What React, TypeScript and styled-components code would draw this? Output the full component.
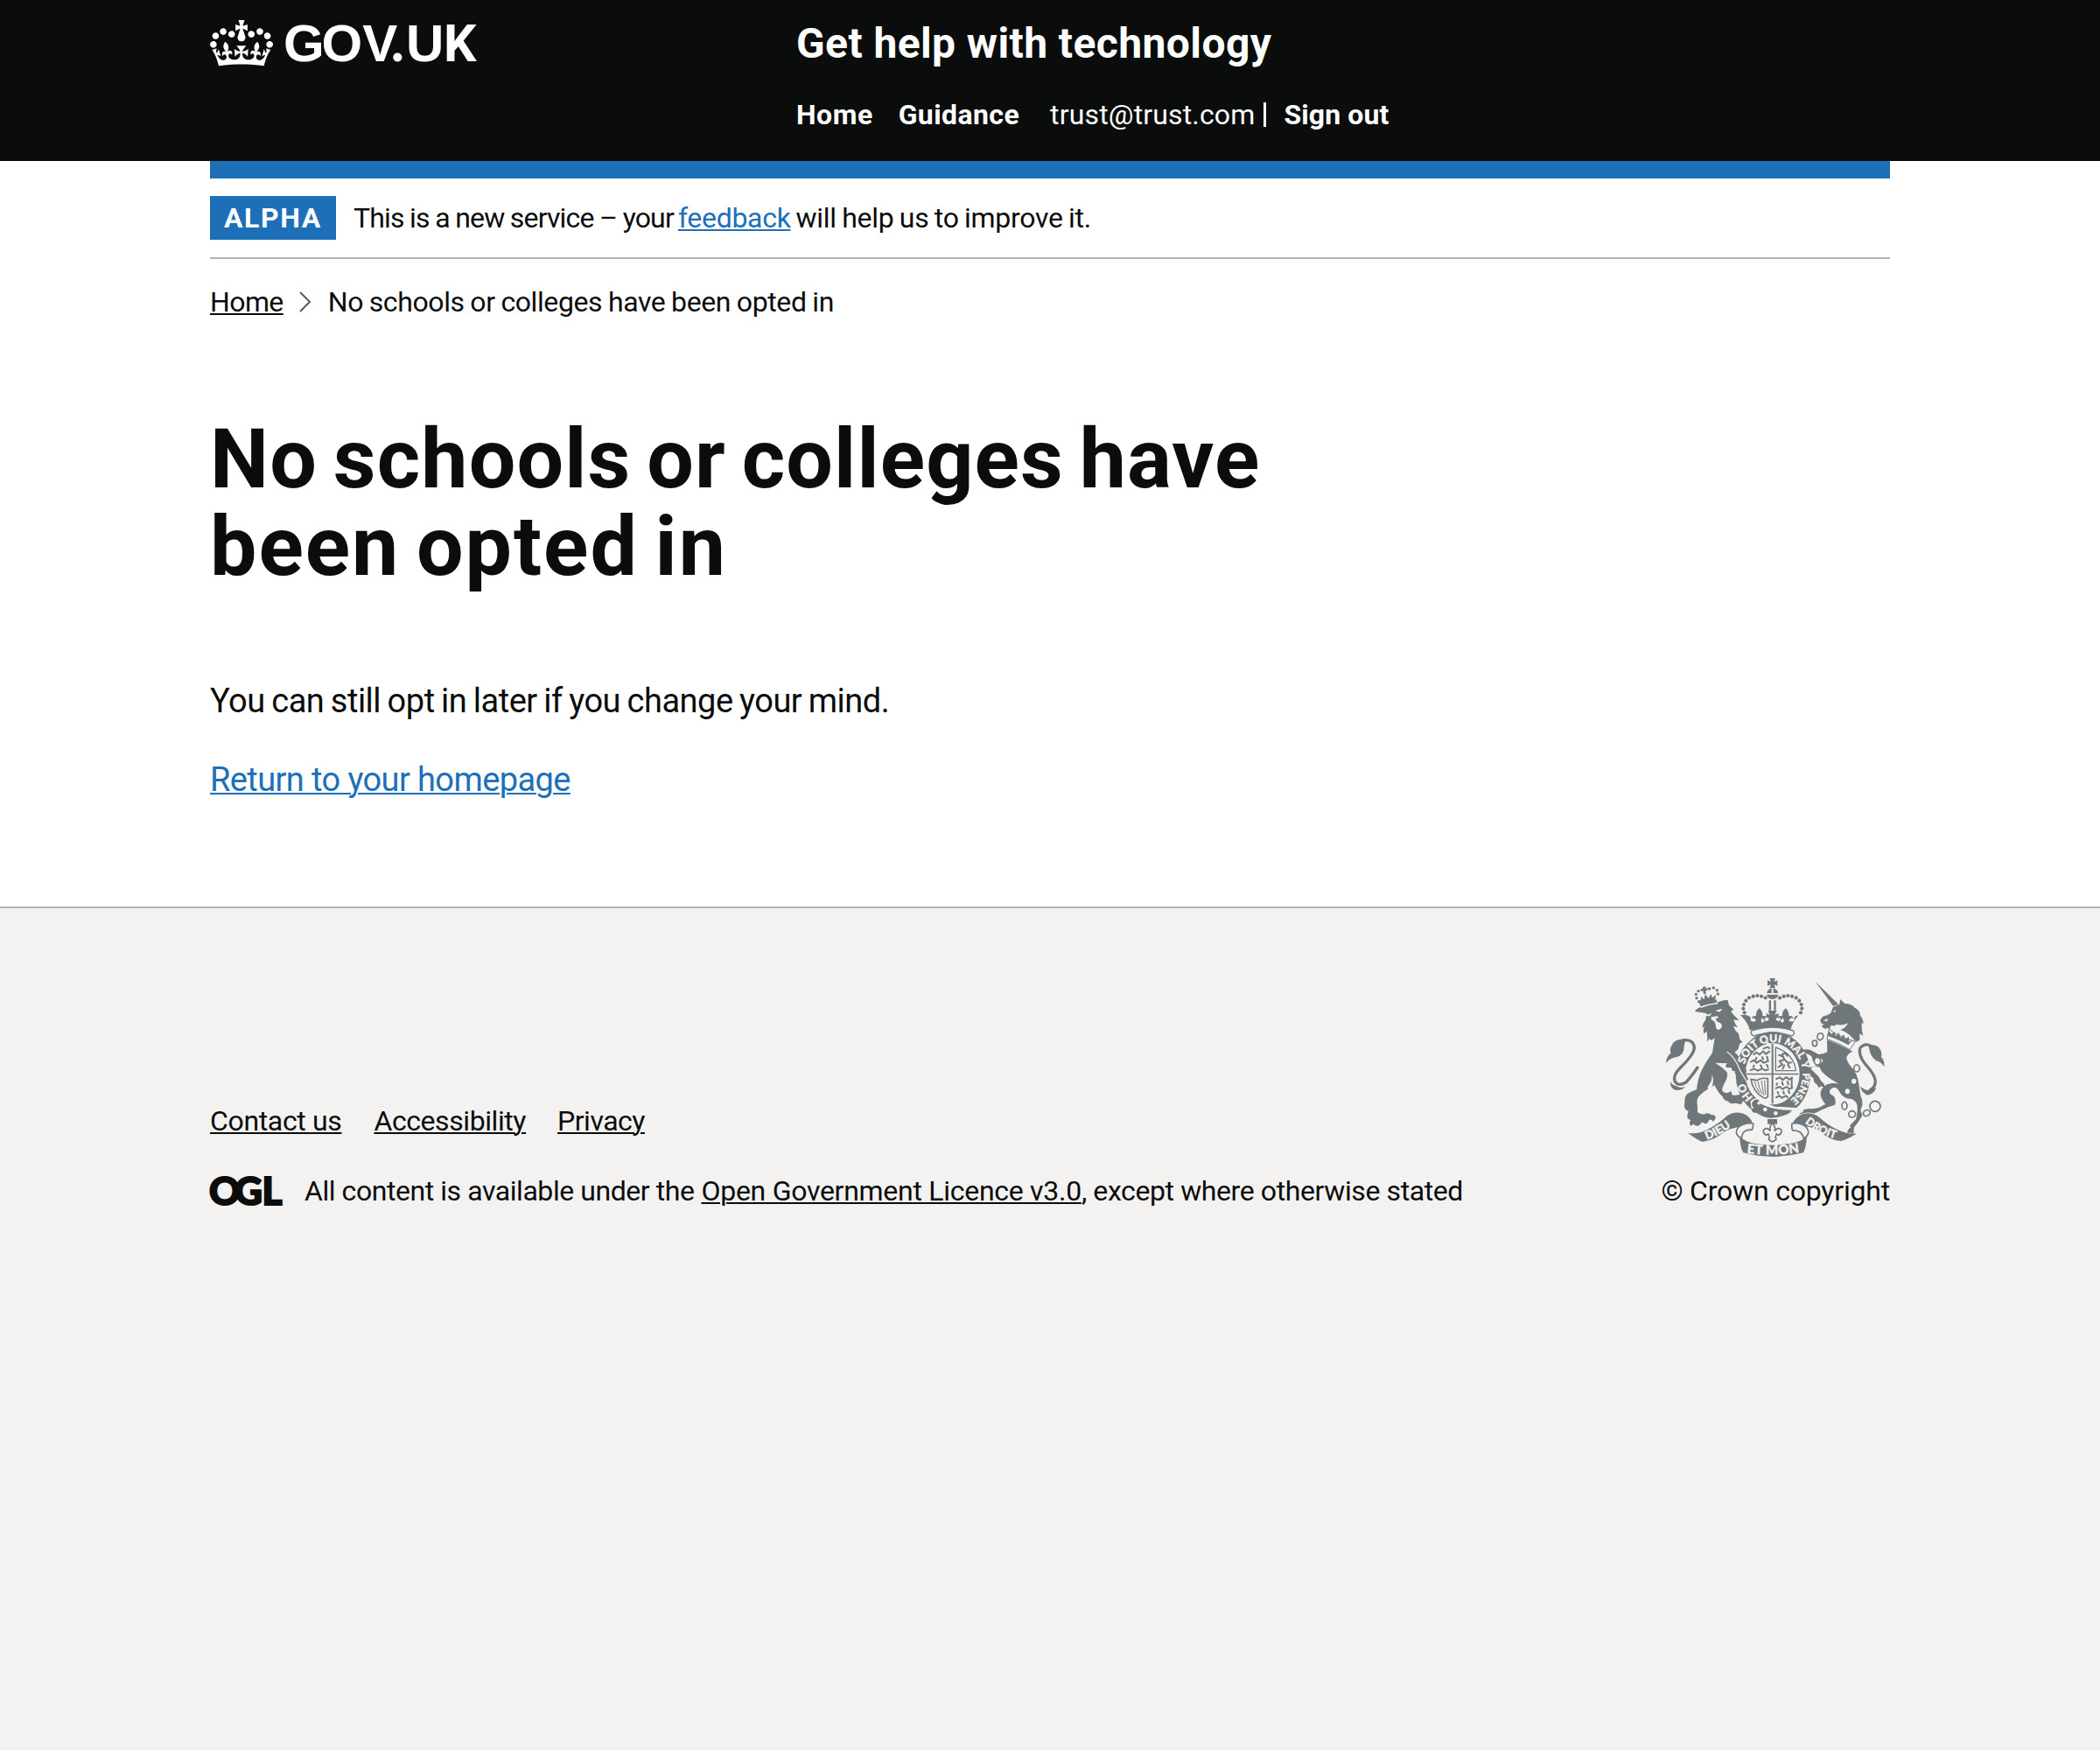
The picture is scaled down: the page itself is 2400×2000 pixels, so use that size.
import React from 'react';
import styled, { createGlobalStyle } from 'styled-components';

const INK = '#0b0c0c';
const BLUE = '#1d70b8';
const PAPER = '#f3f2f1';
const CREST = '#6f777b';

const GlobalStyle = createGlobalStyle`
  html, body { margin: 0; background: ${PAPER}; }
  body { font-family: Roboto, "Liberation Sans", sans-serif; color: ${INK}; }
`;

const Page = styled.div`
  min-height: 2000px;
  display: flex;
  flex-direction: column;
`;

const Container = styled.div`
  width: 1920px;
  margin: 0 auto;
`;

const HeaderBar = styled.header`
  background: ${INK};
  color: #fff;
  height: 184px;
`;

const HeaderGrid = styled(Container)`
  display: grid;
  grid-template-columns: 670px 1fr;
`;

const LogoLink = styled.a`
  display: block;
  padding-top: 23px;
  color: #fff;
`;

const Service = styled.div`
  padding-top: 20px;
`;

const Track = styled.span<{ $ls?: number; $ws?: number }>`
  letter-spacing: ${p => p.$ls ?? 0}px;
  word-spacing: ${p => p.$ws ?? 0}px;
  white-space: nowrap;
`;

const ServiceName = styled.div`
  font-size: 48px;
  line-height: 60px;
  font-weight: 700;
`;

const Nav = styled.nav`
  display: flex;
  align-items: center;
  margin-top: 31px;
  font-size: 32px;
  line-height: 40px;
`;

const NavLink = styled(Track).attrs({ as: 'a' })<{ $gap?: number }>`
  font-weight: 700;
  margin-right: ${p => p.$gap ?? 0}px;
`;

const User = styled(Track)`
  margin-right: 10px;
`;

const Divider = styled.span`
  width: 3px;
  height: 28px;
  margin-right: 20px;
  background: #fff;
`;

const Main = styled.div`
  background: #fff;
  padding-bottom: 120px;
`;

const BlueBar = styled.div`
  height: 20px;
  background: ${BLUE};
`;

const PhaseBanner = styled.div`
  display: flex;
  align-items: center;
  padding: 20px 0;
  border-bottom: 2px solid #b1b4b6;
  font-size: 32px;
  line-height: 50px;
`;

const Tag = styled.strong`
  box-sizing: border-box;
  width: 144px;
  height: 50px;
  margin-right: 20px;
  padding-left: 16px;
  background: ${BLUE};
  color: #fff;
  letter-spacing: 1.6px;
`;

const Link = styled(Track).attrs({ as: 'a' })<{ $color?: string; $gap?: number }>`
  color: ${p => p.$color ?? INK};
  margin-right: ${p => p.$gap ?? 0}px;
  text-decoration: underline;
  text-decoration-thickness: 2px;
  text-underline-offset: 2px;
`;

const Phrase = styled(Track)<{ $gap?: number }>`
  margin-right: ${p => p.$gap ?? 0}px;
`;

const Breadcrumbs = styled.nav`
  display: flex;
  align-items: center;
  margin-top: 29px;
  font-size: 32px;
  line-height: 40px;
`;

const Chevron = styled.svg`
  display: block;
  margin: 0 19px 0 18px;
`;

const Title = styled.h1`
  margin: 110px 0 0;
  font-size: 95px;
  line-height: 100px;
  font-weight: 700;
`;

const TitleLine = styled(Track)`
  display: block;
`;

const Para = styled.p<{ $top: number }>`
  margin: ${p => p.$top}px 0 0;
  font-size: 38px;
  line-height: 50px;
`;

const FooterArea = styled.footer`
  flex: 1;
  background: ${PAPER};
  border-top: 2px solid #b1b4b6;
  padding-top: 80px;
  font-size: 32px;
  line-height: 40px;
`;

const FooterRow = styled(Container)`
  display: flex;
  align-items: flex-end;
  justify-content: space-between;
`;

const FooterLinks = styled.div`
  display: flex;
  margin-bottom: 40px;
`;

const Licence = styled.div`
  display: flex;
  align-items: center;
`;

const OglMark = styled.svg`
  display: block;
  margin-right: 26px;
`;

const Copyright = styled.div`
  display: flex;
  flex-direction: column;
  align-items: flex-end;
`;

const Crest = styled.svg`
  display: block;
  margin: 0 6px 19px 0;
`;

const GovLogo = () => (
  <svg width="310" height="54" viewBox="0 0 310 54" overflow="visible">
    <g transform="scale(.5455)">
      <path
        fill="#fff"
        fillRule="evenodd"
        d="M25 30.2c3.5 1.5 7.7-.2 9.1-3.7 1.5-3.6-.2-7.8-3.9-9.2-3.6-1.4-7.6.3-9.1 3.9-1.4 3.5.3 7.5 3.9 9zM9 39.5c3.6 1.5 7.8-.2 9.2-3.7 1.5-3.6-.2-7.8-3.9-9.1-3.6-1.5-7.6.2-9.1 3.8-1.4 3.5.3 7.5 3.8 9zM4.4 57.2c3.5 1.5 7.7-.2 9.1-3.8 1.5-3.6-.2-7.7-3.9-9.1-3.5-1.5-7.6.3-9.1 3.8-1.4 3.5.3 7.6 3.9 9.1zm38.3-21.4c3.5 1.5 7.7-.2 9.1-3.8 1.5-3.6-.2-7.7-3.9-9.1-3.6-1.5-7.6.3-9.1 3.8-1.3 3.6.4 7.7 3.9 9.1zm64.4-5.6c-3.6 1.5-7.8-.2-9.1-3.7-1.5-3.6.2-7.8 3.8-9.2 3.6-1.4 7.7.3 9.2 3.9 1.3 3.5-.4 7.5-3.9 9zm15.9 9.3c-3.6 1.5-7.7-.2-9.1-3.7-1.5-3.6.2-7.8 3.7-9.1 3.6-1.5 7.7.2 9.2 3.8 1.5 3.5-.3 7.5-3.8 9zm4.7 17.7c-3.6 1.5-7.8-.2-9.2-3.8-1.5-3.6.2-7.7 3.9-9.1 3.6-1.5 7.7.3 9.2 3.8 1.3 3.5-.4 7.6-3.9 9.1zM89.3 35.8c-3.6 1.5-7.8-.2-9.2-3.8-1.4-3.6.2-7.7 3.9-9.1 3.6-1.5 7.7.3 9.2 3.8 1.4 3.6-.3 7.7-3.9 9.1zM69.7 17.7l8.9 4.7V9.3l-8.9 2.8c-.2-.3-.5-.6-.9-.9L72.4 0H59.6l3.5 11.2c-.3.3-.6.5-.9.9l-8.8-2.8v13.1l8.8-4.7c.3.3.6.7.9.9l-5 15.4v.1c-.2.8-.4 1.6-.4 2.4 0 4.1 3.1 7.5 7 8.1h.2c.3 0 .7.1 1 .1.4 0 .7 0 1-.1h.2c4-.6 7.1-4.1 7.1-8.1 0-.8-.1-1.7-.4-2.4V34l-5.1-15.4c.4-.2.7-.6 1-.9zM66 92.8c16.9 0 32.8 1.1 47.1 3.2 4-16.9 8.9-26.7 14-33.5l-9.6-3.4c1 4.9 1.1 7.2 0 10.2-1.5-1.4-3-4.3-4.2-8.7L108.6 76c2.8-2 5-3.2 7.5-3.3-4.4 9.4-10 11.9-13.6 11.2-4.3-.8-6.3-4.6-5.6-7.9 1-4.7 5.7-5.9 8-.5 4.3-8.7-3-11.4-7.6-8.8 7.1-7.2 7.9-13.5 2.1-21.1-8 6.1-8.1 12.3-4.5 20.8-4.7-5.4-12.1-2.5-9.5 6.2 3.4-5.2 7.9-2 7.2 3.1-.6 4.3-6.4 7.8-13.5 7.2-10.3-.9-10.9-8-11.2-13.8 2.5-.5 7.1 1.8 11 7.3L80.2 60c-4.1 4.4-8 5.3-12.3 5.4 1.4-4.4 8-11.6 8-11.6H55.5s6.4 7.2 7.9 11.6c-4.2-.1-8-1-12.3-5.4l1.4 16.4c3.9-5.5 8.5-7.7 10.9-7.3-.3 5.8-.9 12.8-11.1 13.8-7.2.6-12.9-2.9-13.5-7.2-.7-5 3.8-8.3 7.1-3.1 2.7-8.7-4.6-11.6-9.4-6.2 3.7-8.5 3.6-14.7-4.6-20.8-5.8 7.6-5 13.9 2.2 21.1-4.7-2.6-11.9.1-7.7 8.8 2.3-5.5 7.1-4.2 8.1.5.7 3.3-1.3 7.1-5.7 7.9-3.5.7-9-1.8-13.5-11.2 2.5.1 4.7 1.3 7.5 3.3l-4.7-15.4c-1.2 4.4-2.7 7.2-4.3 8.7-1.1-3-.9-5.3 0-10.2l-9.5 3.4c5 6.9 9.9 16.7 14 33.5 14.8-2.1 30.8-3.2 47.7-3.2z"
      />
    </g>
    <text x="84 127.5 174.3 206.5 224 267" y="47" fill="#fff" fontFamily="Liberation Sans" fontWeight="700" fontSize="60">
      GOV<tspan fontFamily="Lato" fontSize="66">.</tspan>U<tspan fontFamily="Roboto" fontSize="59">K</tspan>
    </text>
  </svg>
);

/* Beads running along each arch of the royal crown */
const beads: [number, number][] = [
  [414, 121], [400, 116], [386, 114], [372, 116], [358, 121], [347, 131], [340, 144], [338, 158], [342, 172],
];

const RoyalArms = () => (
  <Crest width="250" height="204" viewBox="73 54 750 612">
    <defs>
      <path id="garter" d="M440 491 A102 109 0 0 1 440 273 A102 109 0 0 1 440 491" />
      <path id="dieu" d="M213 608 Q268 588 322 542" />
      <path id="droit" d="M549 549 Q596 592 680 611" />
      <path id="mon" d="M350 653 Q438 665 528 651" />
    </defs>
    <g fill={CREST} stroke="none">
      {/* royal crown */}
      <path d="M428 54h20l-5 12 12-5v19l-12-5 5 13h-20l5-13-12 5V61l12 5z" />
      <path d="M419 105a19 17 0 0 1 16-16v16zM441 89a19 17 0 0 1 16 16h-16zM418 110h40q-3 14-20 16-17-2-20-16z" />
      <path d="M426 130h7v34h-7zM443 130h7v34h-7z" />
      {beads.map(([x, y]) => (
        <g key={x}>
          <circle cx={x} cy={y} r="6.3" />
          <circle cx={877 - x} cy={y} r="6.3" />
        </g>
      ))}
      <path d="M348 180l14 6 2 14q12 6 18-2l-8-8-8 2q4-12 16-8-2-16 11-27 13 11 11 27 13-4 16 8l-8-3q-5 10 6 12 8-2 8-9l-9-6v-12l12 6-6-15h30l-7 15 13-6v12l-9 6q0 8 9 9 10-2 5-12l-8 3q3-12 16-8-2-16 11-27 13 11 11 27 12-4 16 8l-8-2-8 8q6 8 18 2l2-14 14-6q-24 28-28 52-72-15-140 0-4-24-32-52z" />
      <path fill={PAPER} d="M402 190l10 12-10 4q-6-6 0-16zM474 190l-10 12 10 4q6-6 0-16z" />
      <path fill={PAPER} stroke={CREST} strokeWidth="4" d="M366 234q72-24 144 0 6 12-6 18-66-22-130 0-13-6-8-18z" />

      {/* garter and shield */}
      <ellipse cx="440" cy="384" rx="128" ry="147" />
      <ellipse cx="438" cy="382" rx="93" ry="105" fill={PAPER} />
      <path d="M435 280h6v204h-6zM348 380h180v5H348z" />
      <g fill="none" stroke={CREST} strokeWidth="6" strokeLinejoin="round">
        <path d="M372 316l12-8 10 8 12-12 9 10 14-10M384 324l-4 12M402 322l5 12M419 320l3 14M362 342l12-7 10 9 14-9 10 9 18-8M376 351l-5 10M396 350l6 11M418 348l5 13M360 370l16-5 12 6 14-7 12 6 12-4M405 296l16-6 8 5" />
        <path strokeWidth="4" d="M449 291v80h69q-6-57-69-80z" />
        <path d="M456 360l16-10-10-12 18-5 12 12 12-3M472 322l-14-6M479 333l-8-18 11-5 8 12M490 347l8 15M480 350l-8 16" />
        <path d="M449 400l14-6 10 9 12-10 11 8 12-6M454 412l-2 10M470 408l5 14M489 406l4 15M448 432l15-6 10 8 13-8 10 7 12-4M455 442l4 9M475 440l3 12M492 437l5 13M449 464l12-7 10 7 13-7 8 7M504 392v40" />
        <path strokeWidth="5" d="M364 400l20 4q18-10 38-6v62q-8 10-17 2-34-20-41-62z" />
        <path strokeWidth="3" d="M376 407q6 22 18 40M388 407q4 24 14 44M400 405l8 50M411 404l3 50" />
      </g>

      {/* buckle and strap */}
      <path fill={PAPER} d="M362 476q18-18 34-4l50 22 76 4-8 12q-74 14-128-8l-20-2z" />
      <path d="M368 480q12-17 26-6-10 4-8 12l12 2-4 12-16 16q-10-2-12-10l8-8q-8-6-6-18z" />
      <path d="M396 484q46 24 110 22-34 26-76 27-30-3-48-21z" />
      <circle cx="413" cy="504" r="7" fill={PAPER} />
      <circle cx="449" cy="517" r="7" fill={PAPER} />

      {/* lion */}
      <path d="M172 168q8-14 22-15l66-20q14-6 25-4l4 18 17 15-10 3q6 16 28 32-12 2-20-3 5 17 15 28-8 0-14-5 2 16 17 27l4 20 10 8-10 6-6 20-12 10q14 8 27 36 8 12 14 26l-2 12 8 18q-6 12-16 2-8 8-20 2-6-8 0-18-12-2-10-14-12 2-11-11l-18-1q-6-10 4-14-18-2-42-2 24 14 40 32 4 14-4 30-14 24-12 32 2 8 16 10l16-7q-3 12 6 14 16 2 30-6l-2 6q18 2 18 18-6 10-13 1-4 16-18 10-6-4-18 0-12-2-14-8-16-2-20-16-16-14-28-40l-14 10q-22 10-42 32-6 14-2 30l0 22q12 8 24 6 14-8 22 2 16-2 16 12l-8 12q-6-10-14-7-4 12-14 14-8-8-14-2-6 12-20 8-6-8-14 1-10-8-1-20-14-4-12-16l4-14q-16-6-14-20l2-26q2-16 40-28 4-40 18-68 14-28 36-58l8-52q-14 16-18 2l-8 12q2-22-2-36l-9 8q-4-12 2-24l-8 4q2-16 12-28l3-22z" />
      <path fill="none" stroke={PAPER} strokeWidth="4" d="M282 306q28 18 46 66l22 36" />
      <path fill={PAPER} d="M204 179l20-2 6-4q-4 12-14 11-10 0-12-5zM242 165l23-7q-4 12-12 11zM228 187l20-3 6 5-11 4q0 7 9 12 16 4 12 17-6 10-13 9-9-5-7-14-2-8-4-14l-12-8z" />
      <path fill={PAPER} d="M232 386q6 24-2 40-12 10-4 26-10-8-10-26 16-22 14-34z" />
      <circle cx="186" cy="134" r="5" /><circle cx="178" cy="122" r="5" /><circle cx="176" cy="109" r="5" />
      <circle cx="184" cy="98" r="5" /><circle cx="196" cy="94" r="4" /><circle cx="222" cy="90" r="5" />
      <circle cx="236" cy="87" r="5" /><circle cx="248" cy="95" r="5" /><circle cx="251" cy="108" r="5" />
      <path d="M199 84l10-2-1 7 7-3 1 10-7-1 1 12-8 1-2-12-6 3-2-9 7 1zM183 128l8 4 3-16 9 11 5-19 10 15 9-15 5 13 12-10-2 18 6-2-4 14q-26 1-52 11z" />
      <path fill={PAPER} d="M191 151q28-11 60-14v5q-30 2-58 14z" />
      <path fill="none" stroke={CREST} strokeWidth="10" d="M128 267q40-6 42 26-2 24-50 70-24 24-17 44 12 20 38 4 18-18 42-54" />
      <path d="M140 263q-40-2-49 24-8 16 0 22-18 14-18 36 14-18 34-20 30-8 28-38zM88 408q-2 24 20 30 24 0 30-12-18 6-28-2-14-2-22-16z" />

      {/* unicorn */}
      <path d="M588 68l77 76-19 5-58-79z" />
      <path d="M646 152l22-8 2-18 16 15q24 0 34 14 20 10 19 28 12 12 10 28l-5-5q-2 24 5 45l-13-7q2 10 1 24-8-2-11 6-28-36-56-43 14-2 28-23-20 10-40 4-8 8-14 4-10-2-8 12l-10-4q-8 8-20-6l10-7q-14 0-14-14l8-12q16-2 28-12z" />
      <path fill={PAPER} d="M646 168l9-6-2 8zM612 199l16-7-3 10z" />
      <path fill={PAPER} stroke={CREST} strokeWidth="3" d="M632 228q22 22 90 43l-19 28q-34-22-78-37z" />
      <path d="M632 236l10 10 6-10 8 16 9-12 7 18 11-12 4 18 13-10 0 18 14-8-16 19q-30-18-72-32z" />
      <path d="M625 265q44 16 88 40-16 7-21 19 0 16 16 34 22 24 26 58l6 40q8 18 6 34l-6 16 6 18q-14 26-28 40l-2 24-22 2q0-20 12-24l-2-8 20-20q8-28 4-50-4-14-18-20-30 0-44-28-14-22-30-4-8 14 12 22 10 12 4 30-24 6-48 18-20 12-30 12l-12 9-34-3q6-10 14-12l4-8 18-3q22 2 38-5 10-8 18-10-22-26-16-44 6-24 38-28 16-1 24 2-34-16-60-43l-6-14q-14-4-24-2l-6 8 26 26q6 16 20 26v12l-12-5-6 6-8-12q-10-4-12-22l-12-8-12 2q8-18-2-26 16-6 22-6l24-6 14-16-12-10-10 4q4 10 0 18-10-4-14-12l-4-14q-8-8-18-10l-24 8q6-12 2-17 22-10 38-2l26 14q16 0 30-8z" />
      <path fill="none" stroke={CREST} strokeWidth="10" d="M790 296q-32-28-52-2-6 24 18 54 40 44 34 66-2 18-20 24" />
      <path d="M768 289q14-12 32 0 16 16 11 36 12 10 10 32-12-18-28-20-20-14-25-48zM794 430q-8 20-22 22-10 8-26-10l-8-18q16 14 28 14 14-2 28-8z" />
      <ellipse cx="717" cy="407" rx="8" ry="9" fill={PAPER} />
      <ellipse cx="695" cy="442" rx="8" ry="9" fill={PAPER} />
      <g fill="none" stroke={CREST} strokeWidth="5">
        <ellipse cx="602" cy="254" rx="10" ry="12" transform="rotate(25 602 254)" />
        <ellipse cx="583" cy="277" rx="8" ry="10" fill={PAPER} />
        <ellipse cx="592" cy="338" rx="11" ry="13" fill={PAPER} />
        <ellipse cx="727" cy="363" rx="10" ry="12" fill={PAPER} />
        <ellipse cx="685" cy="491" rx="9" ry="13" /><ellipse cx="711" cy="520" rx="12" ry="11" />
        <ellipse cx="761" cy="516" rx="12" ry="10" transform="rotate(-30 761 516)" /><circle cx="790" cy="493" r="18" />
      </g>

      {/* garter motto */}
      <g fill={PAPER} stroke={PAPER} strokeWidth="1" fontFamily="Lato" fontWeight="900" fontSize="37">
        <text><textPath href="#garter" startOffset="11.5%">HO</textPath></text>
        <text><textPath href="#garter" startOffset="30%">SOIT</textPath></text>
        <text><textPath href="#garter" startOffset="43.5%">QUI</textPath></text>
        <text fontSize="36"><textPath href="#garter" startOffset="55.5%">MAL</textPath></text>
        <text fontSize="34"><textPath href="#garter" startOffset="69%">Y</textPath></text>
        <text fontSize="34"><textPath href="#garter" startOffset="74.5%">PENSE</textPath></text>
      </g>

      {/* fleur-de-lis pendant */}
      <path d="M421 537h33v17h-33z" />
      <path fill={PAPER} stroke={CREST} strokeWidth="5" d="M438 550q13 14 7 28 14-16 23-4 4 12-9 18l-7-4-4 11 3 7q-13 16-26 0l3-7-4-11-7 4q-13-6-9-18 9-12 23 4-6-14 7-28z" />

      {/* motto scroll */}
      <path stroke={PAPER} strokeWidth="4" paintOrder="stroke" d="M148 584q34 6 68-12 40-20 66-46 22-16 48-10 30 6 40 36-22-6-40 10-40 8-60 20-28 26-72 33-20-8-50-31z" />
      <path stroke={PAPER} strokeWidth="4" paintOrder="stroke" d="M728 586q-32 4-66-12-36-18-64-44-24-18-52-12-24 6-40 34 26-6 42 10 30 2 52 16 32 30 72 34 22-4 56-26z" />
      <path fill={PAPER} stroke={CREST} strokeWidth="5" d="M372 552q-32-4-52 14-16 22 12 38 2-34 36-30 4-8 4-22zM505 552q32-4 50 14 16 22-10 38-6-30-38-28-4-8-2-24z" />
      <path d="M326 596q18 20 60 26 54 8 104 0 46-6 66-26-2 36-12 56-106 28-206 0-12-20-12-56z" />
      <g fill={PAPER} stroke={PAPER} strokeWidth="1" fontFamily="Lato" fontWeight="900" fontSize="40">
        <text><textPath href="#dieu">DIEU</textPath></text>
        <text fontSize="38"><textPath href="#droit">DROIT</textPath></text>
        <text fontSize="45" letterSpacing="1"><textPath href="#mon">ET MON</textPath></text>
      </g>
    </g>
  </Crest>
);

export default function App() {
  return (
    <>
      <GlobalStyle />
      <Page>
        <HeaderBar>
          <HeaderGrid>
            <LogoLink><GovLogo /></LogoLink>
            <Service>
              <ServiceName><Track $ls={0.4}>Get help with technology</Track></ServiceName>
              <Nav>
                <NavLink $ls={0.5} $gap={29}>Home</NavLink>
                <NavLink $ls={0.4} $gap={35}>Guidance</NavLink>
                <User $ls={0.15}>trust@trust.com</User>
                <Divider />
                <NavLink $ls={0.1}>Sign out</NavLink>
              </Nav>
            </Service>
          </HeaderGrid>
        </HeaderBar>
        <Main>
          <Container>
            <BlueBar />
            <PhaseBanner>
              <Tag>ALPHA</Tag>
              <Phrase $ls={-0.85} $ws={-0.6} $gap={5}>This is a new service – your</Phrase>
              <Link $color={BLUE} $ls={-0.3} $gap={6}>feedback</Link>
              <Phrase $ls={-0.3} $ws={-1.2}>will help us to improve it.</Phrase>
            </PhaseBanner>
            <Breadcrumbs>
              <Link $ls={-0.6}>Home</Link>
              <Chevron width="14" height="24" viewBox="0 0 14 24">
                <path d="M1 1l11 11L1 23" fill="none" stroke="#505a5f" strokeWidth="2" />
              </Chevron>
              <Phrase $ls={-0.4} $ws={-0.8}>No schools or colleges have been opted in</Phrase>
            </Breadcrumbs>
            <Title>
              <TitleLine $ls={1.15} $ws={-7}>No schools or colleges have </TitleLine>
              <TitleLine $ls={2} $ws={-7}>been opted in</TitleLine>
            </Title>
            <Para $top={101}><Track $ls={-0.5} $ws={-1.4}>You can still opt in later if you change your mind.</Track></Para>
            <Para $top={40}><Link $color={BLUE} $ls={-0.6}>Return to your homepage</Link></Para>
          </Container>
        </Main>
        <FooterArea>
          <FooterRow>
            <div>
              <FooterLinks>
                <Link $ls={-0.35} $gap={37}>Contact us</Link>
                <Link $ls={-0.42} $gap={36}>Accessibility</Link>
                <Link $ls={-0.5}>Privacy</Link>
              </FooterLinks>
              <Licence>
                <OglMark width="82" height="34" viewBox="0 0 82 34" overflow="visible">
                  <text x="-1 28 59.5" y="33" fill={INK} stroke={INK} strokeWidth="2" fontFamily="Lato" fontWeight="900" fontSize="44">OGL</text>
                </OglMark>
                <Phrase $ls={-0.44} $gap={8}>All content is available under the</Phrase>
                <Link $ls={-0.28}>Open Government Licence v3.0</Link>
                <Phrase $ls={-0.4}>, except where otherwise stated</Phrase>
              </Licence>
            </div>
            <Copyright>
              <RoyalArms />
              <Track $ls={-0.2}>© Crown copyright</Track>
            </Copyright>
          </FooterRow>
        </FooterArea>
      </Page>
    </>
  );
}
